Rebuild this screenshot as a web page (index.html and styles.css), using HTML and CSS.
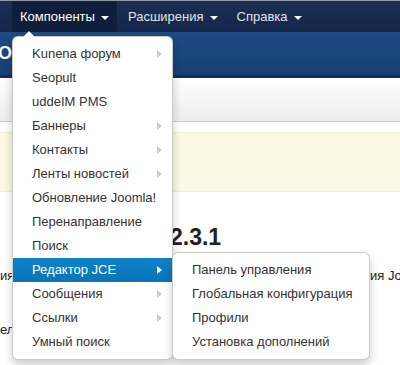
FILE: index.html
```html
<!DOCTYPE html>
<html lang="ru">
<head>
    <meta charset="UTF-8">
    <title>Компоненты</title>
    <link rel="stylesheet" href="styles.css">
</head>
<body>
    <!-- Top menu -->
    <div class="navbar">
        <ul class="nav">
            <li class="nav-item open">
                <a href="#">Компоненты <span class="caret"></span></a>
                <ul class="dropdown-menu">
                    <li class="has-sub"><a href="#">Kunena форум</a></li>
                    <li><a href="#">Seopult</a></li>
                    <li><a href="#">uddeIM PMS</a></li>
                    <li class="has-sub"><a href="#">Баннеры</a></li>
                    <li class="has-sub"><a href="#">Контакты</a></li>
                    <li class="has-sub"><a href="#">Ленты новостей</a></li>
                    <li><a href="#">Обновление Joomla!</a></li>
                    <li><a href="#">Перенаправление</a></li>
                    <li><a href="#">Поиск</a></li>
                    <li class="has-sub active">
                        <a href="#">Редактор JCE</a>
                        <ul class="dropdown-menu submenu">
                            <li><a href="#">Панель управления</a></li>
                            <li><a href="#">Глобальная конфигурация</a></li>
                            <li><a href="#">Профили</a></li>
                            <li><a href="#">Установка дополнений</a></li>
                        </ul>
                    </li>
                    <li class="has-sub"><a href="#">Сообщения</a></li>
                    <li class="has-sub"><a href="#">Ссылки</a></li>
                    <li><a href="#">Умный поиск</a></li>
                </ul>
            </li>
            <li class="nav-item"><a href="#">Расширения <span class="caret"></span></a></li>
            <li class="nav-item"><a href="#">Справка <span class="caret"></span></a></li>
        </ul>
    </div>

    <!-- Header -->
    <div class="header">
        <h1>ОБЗОР</h1>
    </div>

    <div class="toolbar"></div>

    <!-- Main Content -->
    <div class="content">
        <div class="alert"></div>
        <h2 class="version">2.3.1</h2>
        <p class="line"><span>ия</span><span class="tail">ия Joo</span></p>
        <p class="line"><span>ел</span></p>
    </div>
</body>
</html>
```

FILE: styles.css
```css
* {
    margin: 0;
    padding: 0;
    box-sizing: border-box;
}

html, body {
    height: 100%;
    overflow: hidden;
}

body {
    font-family: "Liberation Sans", Arial, Helvetica, sans-serif;
    font-size: 13px;
    color: #333;
    background-color: #fff;
}

a {
    text-decoration: none;
}

ul {
    list-style: none;
}

/* Top menu */
.navbar {
    height: 32px;
    background: linear-gradient(#1c2f52, #14264a);
    border-top: 1px solid #8d97a8;
    position: relative;
    z-index: 10;
}

.nav {
    display: flex;
    height: 100%;
    padding-left: 12px;
}

.nav-item {
    position: relative;
}

.nav-item > a {
    display: flex;
    align-items: center;
    height: 31px;
    padding: 0 8px;
    margin-right: 3px;
    color: #dfe4ec;
    font-size: 13px;
}

.nav-item.open > a {
    background-color: #0f1e3a;
    color: #fff;
}

.caret {
    display: inline-block;
    width: 0;
    height: 0;
    margin-left: 6px;
    margin-top: 2px;
    border-top: 4px solid #fff;
    border-left: 4px solid transparent;
    border-right: 4px solid transparent;
}

/* Dropdown */
.dropdown-menu {
    position: absolute;
    top: 100%;
    left: 0;
    margin-top: 4px;
    width: 161px;
    padding: 5px 0;
    background-color: #fff;
    border: 1px solid rgba(0, 0, 0, 0.2);
    border-radius: 6px;
    box-shadow: 0 5px 10px rgba(0, 0, 0, 0.2);
}

.nav-item > .dropdown-menu::before {
    content: "";
    position: absolute;
    top: -7px;
    left: 9px;
    border-left: 7px solid transparent;
    border-right: 7px solid transparent;
    border-bottom: 7px solid rgba(0, 0, 0, 0.2);
}

.nav-item > .dropdown-menu::after {
    content: "";
    position: absolute;
    top: -6px;
    left: 10px;
    border-left: 6px solid transparent;
    border-right: 6px solid transparent;
    border-bottom: 6px solid #fff;
}

.dropdown-menu li {
    position: relative;
}

.dropdown-menu li a {
    display: block;
    padding: 3px 19px;
    line-height: 18px;
    color: #333;
    white-space: nowrap;
}

.has-sub > a::after {
    content: "";
    position: absolute;
    right: 10px;
    top: 8px;
    border-top: 4px solid transparent;
    border-bottom: 4px solid transparent;
    border-left: 5px solid #ccc;
}

.dropdown-menu li.active > a {
    background: linear-gradient(#0f82c8, #0a74b8);
    color: #fff;
}

.has-sub.active > a::after {
    border-left-color: #fff;
}

.submenu {
    top: -6px;
    left: 100%;
    margin-top: 0;
    width: 198px;
}

/* Header */
.header {
    height: 46px;
    background: linear-gradient(#1e4b84, #173f73);
    border-bottom: 3px solid #142f58;
    overflow: hidden;
}

.header h1 {
    font-size: 18px;
    color: #fff;
    line-height: 43px;
    margin-left: -2px;
}

.toolbar {
    height: 44px;
    background: linear-gradient(#ffffff, #ececec);
    border-bottom: 1px solid #cccccc;
}

/* Content */
.content {
    padding-top: 10px;
}

.alert {
    height: 60px;
    background-color: #fcf8e3;
    border-top: 1px solid #f6eed0;
    border-bottom: 1px solid #f2ecd9;
}

.version {
    margin-top: 30px;
    padding-left: 170px;
    font-size: 23px;
    line-height: 30px;
    color: #222;
}

.line {
    display: flex;
    justify-content: space-between;
    margin-top: 15px;
    line-height: 18px;
    color: #222;
    white-space: nowrap;
}

.line + .line {
    margin-top: 36px;
}

.tail {
    width: 30px;
    overflow: hidden;
}
```
